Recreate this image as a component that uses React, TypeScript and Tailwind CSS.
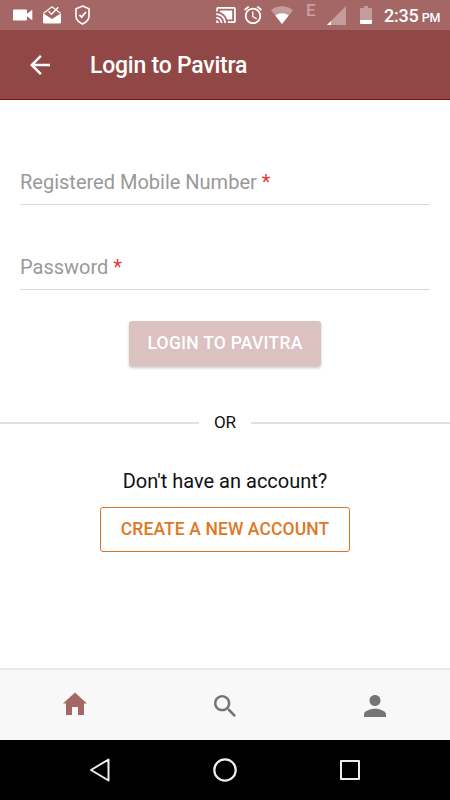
import { useState } from 'react'

type TabName = 'home' | 'search' | 'profile'

const tabs: { name: TabName; label: string; path: string; viewBox: string; className: string }[] = [
  {
    name: 'home',
    label: 'Home',
    viewBox: '0 0 24 23',
    path: 'M12 .5 0 11.5h3V23h6v-8h6v8h6V11.5h3L12 .5z',
    className: 'h-[23px] w-6 -translate-y-0.5',
  },
  {
    name: 'search',
    label: 'Search',
    viewBox: '3 3 17.49 17.49',
    path: 'M15.5 14h-.79l-.28-.27C15.41 12.59 16 11.11 16 9.5 16 5.91 13.09 3 9.5 3S3 5.91 3 9.5 5.91 16 9.5 16c1.61 0 3.09-.59 4.23-1.57l.27.28v.79l5 4.99L20.49 19l-4.99-5zm-6 0C7.01 14 5 11.99 5 9.5S7.01 5 9.5 5 14 7.01 14 9.5 11.99 14 9.5 14z',
    className: 'h-[22px] w-[22px] translate-y-px',
  },
  {
    name: 'profile',
    label: 'Profile',
    viewBox: '4 4 16 16',
    path: 'M12 12c2.21 0 4-1.79 4-4s-1.79-4-4-4-4 1.79-4 4 1.79 4 4 4zm0 2c-2.67 0-8 1.34-8 4v2h16v-2c0-2.66-5.33-4-8-4z',
    className: 'h-[22px] w-[22px] translate-y-px',
  },
]

function StatusBar() {
  return (
    <div className="flex h-[30px] items-center bg-[#a56766] text-white">
      <svg viewBox="0 0 20 12" className="ml-[13px] h-3 w-5" fill="currentColor">
        <path d="M1 .5h12a1 1 0 0 1 1 1v3.2L19.3.8v10.4L14 7.3v3.2a1 1 0 0 1-1 1H1a1 1 0 0 1-1-1v-9a1 1 0 0 1 1-1z" />
      </svg>
      <svg viewBox="0 0 18 18" className="ml-2.5 h-[18px] w-[18px]" fill="none" stroke="currentColor">
        <path d="M.6 7.2 9 .8l8.4 6.4" strokeWidth="1.1" />
        <path d="m5.5 5.3 3 3 6.8-7" strokeWidth="1.5" />
        <path d="M0 7.3 9 13l9-5.7V16a1.6 1.6 0 0 1-1.6 1.6H1.6A1.6 1.6 0 0 1 0 16z" fill="currentColor" stroke="none" />
      </svg>
      <svg viewBox="0 0 16 20" className="ml-3.5 h-5 w-4" fill="none" stroke="currentColor">
        <path d="M7.5 1 14 3.8V11c0 3.6-2.7 6.3-6.5 8C3.7 17.3 1 14.6 1 11V3.8z" strokeWidth="1.6" />
        <path d="m4.4 9.8 2.2 2.3 4.3-5.1" strokeWidth="1.8" />
      </svg>

      <svg viewBox="1 3 22 18" className="ml-[125px] h-4 w-5" fill="currentColor">
        <path d="M1 18v3h3c0-1.66-1.34-3-3-3zm0-4v2c2.76 0 5 2.24 5 5h2c0-3.87-3.13-7-7-7zm18-7H5v1.63c3.96 1.28 7.09 4.41 8.37 8.37H19V7zM1 10v2c4.97 0 9 4.03 9 9h2c0-6.08-4.93-11-11-11zm20-7H3c-1.1 0-2 .9-2 2v3h2V5h18v14h-7v2h7c1.1 0 2-.9 2-2V5c0-1.1-.9-2-2-2z" />
      </svg>
      <svg viewBox="2 2 20 20" className="ml-2 h-[18px] w-[18px]" fill="currentColor">
        <path d="m22 5.72-4.6-3.86-1.29 1.53 4.6 3.86L22 5.72zM7.88 3.39 6.6 1.86 2 5.71l1.29 1.53 4.59-3.85zM12.5 8H11v6l4.75 2.85.75-1.23-4-2.37V8zM12 4c-4.97 0-9 4.03-9 9s4.02 9 9 9c4.97 0 9-4.03 9-9s-4.03-9-9-9zm0 16c-3.87 0-7-3.13-7-7s3.13-7 7-7 7 3.13 7 7-3.13 7-7 7z" />
      </svg>
      <svg viewBox="0 0 22 18" className="ml-[9px] h-[18px] w-[22px]" fill="currentColor">
        <path d="M11 18 0 4.2C6-1.2 16-1.2 22 4.2z" opacity=".35" />
        <path d="M11 18 4.3 9.4c4-2.9 9.4-2.9 13.4 0z" />
      </svg>
      <span className="ml-[13px] w-[21px] -translate-y-[5px] text-[17px] leading-none font-medium text-[#ca9f9f]">E</span>
      <svg viewBox="0 0 19 19" className="h-[19px] w-[19px]" fill="currentColor">
        <path d="M19 0v19H0z" opacity=".35" />
        <path d="M4 15v4H0z" />
      </svg>
      <svg viewBox="0 0 12 18" className="ml-3.5 h-[18px] w-3" fill="currentColor">
        <path d="M4 0h4v2h4v12H0V2h4z" opacity=".35" />
        <path d="M0 14h12v3a1 1 0 0 1-1 1H1a1 1 0 0 1-1-1z" />
      </svg>
      <div className="ml-3 flex items-baseline pt-0.5 font-medium whitespace-nowrap">
        <span className="text-[18px] leading-[30px] tracking-[-0.2px]">2:35</span>
        <span className="ml-[3px] text-[12.5px] tracking-[-0.2px]">PM</span>
      </div>
    </div>
  )
}

function Field({ label, type }: { label: string; type: string }) {
  const [value, setValue] = useState('')

  return (
    <label className="relative block h-[45px] border-b border-[#d9d9d9]">
      {value === '' && (
        <span className="block text-[20px] leading-[45px] text-[#999999]">
          {label} <span className="text-[#e53935]">*</span>
        </span>
      )}
      <input
        type={type}
        value={value}
        onChange={(e) => setValue(e.target.value)}
        className="absolute inset-0 bg-transparent text-[20px] outline-none"
      />
    </label>
  )
}

function SystemNav() {
  return (
    <div className="flex h-[60px] items-center justify-center gap-[99px] bg-black text-[#eeeeee]">
      <svg viewBox="0 0 26 26" className="h-[26px] w-[26px]" fill="none" stroke="currentColor" strokeWidth="2" strokeLinejoin="round">
        <path d="M21.5 2.5v21L4 13z" />
      </svg>
      <svg viewBox="0 0 26 26" className="h-[26px] w-[26px]" fill="none" stroke="currentColor" strokeWidth="2.2">
        <circle cx="13" cy="13" r="10.7" />
      </svg>
      <svg viewBox="0 0 26 26" className="h-[26px] w-[26px]" fill="none" stroke="currentColor" strokeWidth="2" strokeLinejoin="round">
        <path d="M4 4h18v18H4z" />
      </svg>
    </div>
  )
}

export default function App() {
  const [activeTab, setActiveTab] = useState<TabName>('home')

  return (
    <div className="flex h-[800px] w-[450px] flex-col overflow-hidden bg-white font-[Roboto,sans-serif]">
      <StatusBar />
      <header className="flex h-[70px] items-center border-b border-[#7a0a0c] bg-[#914745] text-white">
        <button aria-label="Back" className="ml-[30px]">
          <svg viewBox="4 4 16 16" className="h-5 w-5" fill="currentColor">
            <path d="M20 11H7.83l5.59-5.59L12 4l-8 8 8 8 1.41-1.41L7.83 13H20v-2z" />
          </svg>
        </button>
        <h1 className="ml-10 pt-[3px] text-[23px] font-medium tracking-[-0.23px]">Login to Pavitra</h1>
      </header>

      <main className="flex flex-1 flex-col items-center">
        <form className="flex w-full flex-col gap-10 px-5 pt-[60px]" onSubmit={(e) => e.preventDefault()}>
          <Field label="Registered Mobile Number" type="tel" />
          <Field label="Password" type="password" />
          <button
            type="submit"
            className="-mt-[9px] h-[45px] w-[192px] self-center rounded-[3px] bg-[#dbc1c0] text-[17.5px] font-medium tracking-[0.25px] text-white shadow-[0_2px_3px_rgba(0,0,0,0.22)]"
          >
            LOGIN TO PAVITRA
          </button>
        </form>

        <div className="mt-[42px] flex h-[30px] w-full items-center">
          <div className="h-0.5 flex-1 bg-[#e1e1e1]" />
          <span className="w-[52px] text-center text-[17px] text-[#111111]">OR</span>
          <div className="h-0.5 flex-1 bg-[#e1e1e1]" />
        </div>

        <p className="mt-[28px] text-[20px] leading-[30px] text-[#111111]">Don't have an account?</p>
        <button className="mt-[11px] h-[45px] w-[250px] rounded-[3px] border border-[#dd7324] text-[17.5px] font-medium tracking-[0.1px] text-[#df7826]">
          CREATE A NEW ACCOUNT
        </button>
      </main>

      <nav className="grid h-[72px] grid-cols-3 border-t-2 border-[#e9e9e9] bg-[#f8f8f8]">
        {tabs.map((tab) => (
          <button
            key={tab.name}
            aria-label={tab.label}
            onClick={() => setActiveTab(tab.name)}
            className={`flex items-center justify-center ${activeTab === tab.name ? 'text-[#a56766]' : 'text-[#757575]'}`}
          >
            <svg viewBox={tab.viewBox} className={tab.className} fill="currentColor">
              <path d={tab.path} />
            </svg>
          </button>
        ))}
      </nav>
      <SystemNav />
    </div>
  )
}
